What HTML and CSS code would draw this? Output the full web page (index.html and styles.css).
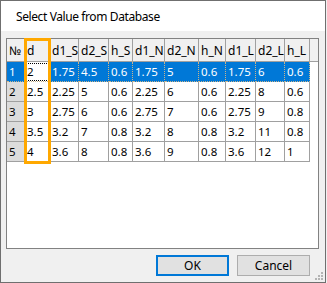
FILE: index.html
```html
<!DOCTYPE html>
<html lang="en">
<head>
    <meta charset="UTF-8">
    <title>Select Value from Database</title>
    <link rel="stylesheet" href="styles.css">
</head>
<body>
    <div class="window">
        <div class="titlebar">Select Value from Database</div>
        <div class="client">
            <div class="grid">
                <table class="data">
                    <colgroup>
                        <col style="width: 18px">
                        <col style="width: 25px">
                        <col style="width: 29px">
                        <col style="width: 30px">
                        <col style="width: 24px">
                        <col style="width: 32px">
                        <col style="width: 34px">
                        <col style="width: 27px">
                        <col style="width: 30px">
                        <col style="width: 29px">
                        <col style="width: 25px">
                        <col style="width: 8px">
                    </colgroup>
                    <thead>
                        <tr>
                            <th>№</th><th>d</th><th>d1_S</th><th>d2_S</th><th>h_S</th><th>d1_N</th><th>d2_N</th><th>h_N</th><th>d1_L</th><th>d2_L</th><th>h_L</th><th class="filler"></th>
                        </tr>
                    </thead>
                    <tbody>
                        <tr class="selected">
                            <td class="rowhead">1</td><td class="current">2</td><td>1.75</td><td>4.5</td><td>0.6</td><td>1.75</td><td>5</td><td>0.6</td><td>1.75</td><td>6</td><td>0.6</td><td class="blank"></td>
                        </tr>
                        <tr>
                            <td class="rowhead">2</td><td>2.5</td><td>2.25</td><td>5</td><td>0.6</td><td>2.25</td><td>6</td><td>0.6</td><td>2.25</td><td>8</td><td>0.6</td><td class="blank"></td>
                        </tr>
                        <tr>
                            <td class="rowhead">3</td><td>3</td><td>2.75</td><td>6</td><td>0.6</td><td>2.75</td><td>7</td><td>0.6</td><td>2.75</td><td>9</td><td>0.8</td><td class="blank"></td>
                        </tr>
                        <tr>
                            <td class="rowhead">4</td><td>3.5</td><td>3.2</td><td>7</td><td>0.8</td><td>3.2</td><td>8</td><td>0.8</td><td>3.2</td><td>11</td><td>0.8</td><td class="blank"></td>
                        </tr>
                        <tr>
                            <td class="rowhead">5</td><td>4</td><td>3.6</td><td>8</td><td>0.8</td><td>3.6</td><td>9</td><td>0.8</td><td>3.6</td><td>12</td><td>1</td><td class="blank"></td>
                        </tr>
                    </tbody>
                </table>
                <!-- highlight of the d column -->
                <div class="column-mark"></div>
            </div>
            <div class="buttons">
                <button class="btn default">OK</button>
                <button class="btn">Cancel</button>
            </div>
            <svg class="grip" width="8" height="8" viewBox="0 0 8 8">
                <rect x="6" y="0" width="2" height="2" fill="#b4b4b4"/>
                <rect x="3" y="3" width="2" height="2" fill="#b4b4b4"/>
                <rect x="6" y="3" width="2" height="2" fill="#b4b4b4"/>
                <rect x="0" y="6" width="2" height="2" fill="#b4b4b4"/>
                <rect x="3" y="6" width="2" height="2" fill="#b4b4b4"/>
                <rect x="6" y="6" width="2" height="2" fill="#b4b4b4"/>
            </svg>
        </div>
    </div>
</body>
</html>
```

FILE: styles.css
```css
/* base */
* {
    margin: 0;
    padding: 0;
    box-sizing: border-box;
}

body {
    width: 327px;
    height: 283px;
    background: #f0f0f0;
    font-family: 'Noto Sans', 'Open Sans', sans-serif;
    overflow: hidden;
}

/* dialog frame */
.window {
    width: 326px;
    height: 283px;
    border: 1px solid #6f6f6f;
    display: flex;
    flex-direction: column;
    background: #f0f0f0;
}

.titlebar {
    height: 30px;
    background: #ffffff;
    color: #000;
    font-size: 12px;
    letter-spacing: -0.4px;
    line-height: 31px;
    padding-left: 15px;
}

.client {
    position: relative;
    flex: 1;
    padding: 7px 6px 6px 5px;
    display: flex;
    flex-direction: column;
}

/* data grid */
.grid {
    position: relative;
    width: 313px;
    height: 211px;
    border: 1px solid #828282;
    background: #ffffff;
}

.data {
    border-collapse: separate;
    border-spacing: 0;
    table-layout: fixed;
    width: 311px;
    font-size: 11.5px;
    color: #000;
}

.data th,
.data td {
    border-right: 1px solid #a0a0a0;
    border-bottom: 1px solid #a0a0a0;
    text-align: left;
    font-weight: normal;
    white-space: nowrap;
    overflow: hidden;
    padding: 0 0 0 2px;
}

.data th {
    height: 23px;
    background: #f0f0f0;
    font-size: 12px;
}

.data td {
    height: 20px;
}

.data th.filler {
    border-right: none;
}

.data td.blank {
    border: none;
    background: #ffffff;
}

.data td.rowhead {
    background: #dcdcdc;
}

/* selected row */
.selected td,
.selected td.rowhead {
    background: #0078d7;
    color: #ffffff;
    border-right-style: dotted;
    border-bottom-style: dotted;
    border-color: #c9b48c;
}

.selected td.current {
    background: #ffffff;
    color: #000;
    outline: 1px dotted #000;
    outline-offset: -2px;
}

.selected td.blank {
    background: #ffffff;
}

/* orange highlight */
.column-mark {
    position: absolute;
    left: 17px;
    top: -1px;
    width: 27px;
    height: 126px;
    border: 3px solid #ffa800;
    pointer-events: none;
}

/* buttons */
.buttons {
    display: flex;
    justify-content: flex-end;
    gap: 8px;
    margin-top: 6px;
    padding-right: 9px;
}

.btn {
    width: 73px;
    height: 21px;
    background: #e1e1e1;
    border: 1px solid #adadad;
    font-family: 'Noto Sans', 'Open Sans', sans-serif;
    font-size: 12px;
    color: #000;
}

.btn.default {
    border: 2px solid #0078d7;
}

.grip {
    position: absolute;
    right: 2px;
    bottom: 2px;
}
```
